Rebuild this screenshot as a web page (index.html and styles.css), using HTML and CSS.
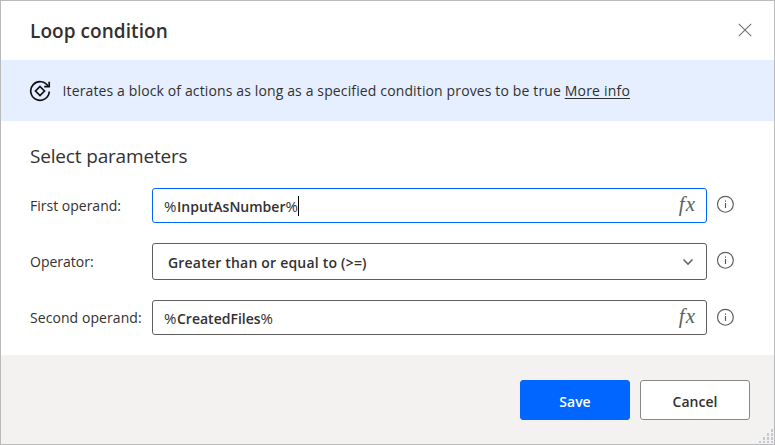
FILE: index.html
```html
<!DOCTYPE html>
<html lang="en">
<head>
<meta charset="utf-8">
<title>Loop condition</title>
<link rel="stylesheet" href="styles.css">
</head>
<body>
<svg class="defs" aria-hidden="true">
  <symbol id="info" viewBox="0 0 18 18"><circle cx="9.400" cy="9.300" r="7.9" fill="none" stroke="currentColor" stroke-width="1.15"/><path d="M9.500 8v5M9.500 5.500v1.300" stroke="currentColor" stroke-width="1.2" fill="none"/></symbol>
</svg>
<main class="dialog">
  <header class="header">
    <h1 class="title">Loop condition</h1>
    <svg class="close" viewBox="0 0 14 14"><path d="M.8.8l12.400 12.400M13.200.8L.8 13.200" stroke="#737373" stroke-width="1.1"/></svg>
  </header>
  <section class="banner">
    <svg class="loop" viewBox="0 0 22 22" fill="none" stroke="#111" stroke-width="1.7"><path d="M19.300 6.700A9.300 9.300 0 1 0 20.300 11.500"/><path d="M20.200 1.700v5h-5"/><path d="M11 6.500l4.500 4.500-4.500 4.500L6.500 11z"/></svg>
    <p class="description">Iterates a block of actions as long as a specified condition proves to be true <a class="more">More info</a></p>
  </section>
  <section class="params">
    <h2 class="subtitle">Select parameters</h2>
    <div class="row">
      <span class="label">First operand:</span>
      <div class="field focused"><span class="value"><i class="pct">%</i>InputAsNumber<i class="pct">%</i></span><span class="caret"></span><span class="fx">fx</span></div>
      <svg class="info"><use href="#info"/></svg>
    </div>
    <div class="row operator">
      <span class="label">Operator:</span>
      <div class="field select"><span class="value choice">Greater than or equal to (&gt;=)</span><svg class="chevron" viewBox="0 0 12 8"><path d="M1.500 1.500L6 6l4.500-4.500" fill="none" stroke="#666" stroke-width="1.6"/></svg></div>
      <svg class="info"><use href="#info"/></svg>
    </div>
    <div class="row">
      <span class="label wide">Second operand:</span>
      <div class="field"><span class="value"><i class="pct">%</i>CreatedFiles<i class="pct">%</i></span><span class="fx">fx</span></div>
      <svg class="info low"><use href="#info"/></svg>
    </div>
  </section>
  <footer class="footer">
    <button class="button save">Save</button>
    <button class="button">Cancel</button>
    <svg class="grip" viewBox="0 0 14 14" fill="#c0c9dc"><path d="M12 0h2v3h-2zM12 4h2v3h-2zM8 4h2v3H8zM12 8h2v3h-2zM8 8h2v3H8zM4 8h2v3H4zM12 12h2v2h-2zM8 12h2v2H8zM4 12h2v2H4zM0 12h2v2H0z"/></svg>
  </footer>
</main>
</body>
</html>
```
FILE: styles.css
```css
* { box-sizing: border-box; }
body { margin: 0; font: 14px/20px "Open Sans", "Noto Sans", sans-serif; color: #323130; }
.defs { position: absolute; width: 0; height: 0; }
.dialog { width: 775px; height: 445px; border: 1px solid #bababa; background: #fff; display: flex; flex-direction: column; }
.header { height: 59px; padding: 1px 22px 0 29px; display: flex; align-items: center; justify-content: space-between; }
.title { margin: 0; font-size: 19px; line-height: 26px; font-weight: 600; letter-spacing: .06px; }
.close { width: 14px; height: 14px; margin-bottom: 2px; }
.banner { height: 61px; padding-left: 28px; background: #e5efff; display: flex; align-items: center; gap: 11.500px; }
.loop { width: 22px; height: 22px; }
.description { margin: 0; white-space: nowrap; letter-spacing: .13px; }
.more { text-decoration: underline; text-underline-offset: 2px; letter-spacing: .2px; }
.params { height: 234px; padding: 22px 38px 0 29px; }
.subtitle { margin: 0 0 19px; font-size: 19px; line-height: 26px; font-weight: 400; letter-spacing: -.17px; }
.row { display: flex; align-items: center; height: 35px; margin-bottom: 20px; }
.operator { height: 37px; }
.label { width: 122px; white-space: nowrap; padding-top: 1px; }
.wide { letter-spacing: .07px; }
.field { width: 555px; height: 100%; border: 1px solid #605e5c; border-radius: 3px; display: flex; align-items: center; padding: 0 10px 0 11px; font-weight: 600; }
.focused { border-color: #0066ff; }
.select { padding: 0 12px 0 15px; }
.value { padding-top: 2px; white-space: nowrap; }
.choice { letter-spacing: .2px; }
.pct { font-style: normal; font-weight: 400; font-size: 15px; display: inline-block; width: 13px; }
.caret { width: 1px; height: 20px; background: #000; }
.fx { margin-left: auto; font: italic 21px/24px "Liberation Serif", serif; letter-spacing: 1px; color: #605e5c; padding-bottom: 3px; }
.chevron { width: 12px; height: 8px; margin-left: auto; }
.info { width: 18px; height: 18px; margin: 0 0 3px 9px; color: #605e5c; }
.low { margin-bottom: 1px; }
.footer { flex: 1; background: #f3f2f1; display: flex; gap: 10px; justify-content: flex-end; padding: 25px 24px 0 0; position: relative; }
.button { width: 110px; height: 40px; border: 1px solid #8a8886; border-radius: 3px; background: #fff; color: #323130; font: 600 14px/20px "Open Sans", sans-serif; padding: 3px 0 0; }
.save { background: #0066ff; border-color: #0066ff; color: #fff; }
.grip { position: absolute; right: 1px; bottom: 1px; width: 14px; height: 14px; }
```
